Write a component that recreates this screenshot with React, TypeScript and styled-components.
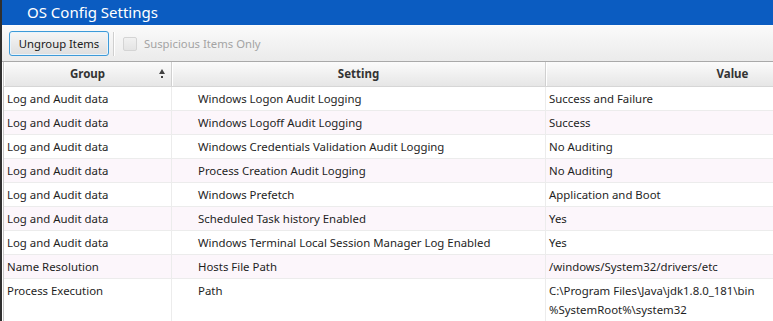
import React from "react";
import styled, { createGlobalStyle } from "styled-components";

const Global = createGlobalStyle`
  html, body { margin: 0; padding: 0; background: #ffffff; overflow: hidden; }
  body { font-family: "Noto Sans", "Open Sans", sans-serif; }
`;

const Window = styled.div`
  width: 773px;
  height: 321px;
  display: flex;
  flex-direction: column;
  border-left: 2px solid #2f2f2f;
  box-sizing: border-box;
  overflow: hidden;
  background: #ffffff;
`;

const TitleBar = styled.div`
  height: 25px;
  flex: none;
  background: #0b5cc1;
  color: #ffffff;
  font-family: "Noto Sans", sans-serif;
  font-size: 15px;
  line-height: 25px;
  padding-left: 25px;
`;

const Toolbar = styled.div`
  height: 37px;
  flex: none;
  box-sizing: border-box;
  border-top: 1px solid #fdfdfd;
  border-bottom: 1px solid #a9a9a9;
  background: linear-gradient(#fafafa, #ebebeb);
  display: flex;
  align-items: center;
  padding-left: 7px;
`;

const Button = styled.button`
  height: 25px;
  width: 100px;
  box-sizing: border-box;
  border: 1px solid #3d9ad8;
  border-radius: 3px;
  background: linear-gradient(#f6f6f6, #dedede);
  box-shadow: inset 0 0 0 1px #e8f4fc;
  font-family: "Noto Sans", sans-serif;
  font-size: 11.3px;
  color: #202020;
  padding: 0;
`;

const Separator = styled.div`
  width: 1px;
  height: 24px;
  background: #cfcfcf;
  border-right: 1px solid #ffffff;
  margin: 0 8px 0 4px;
`;

const CheckRow = styled.label`
  display: flex;
  align-items: center;
  gap: 7px;
  font-size: 11.3px;
  color: #a4a4a4;
  font-family: "Noto Sans", sans-serif;
`;

const CheckBox = styled.span`
  width: 14px;
  height: 14px;
  box-sizing: border-box;
  border: 1px solid #d4d4d4;
  border-radius: 2px;
  background: linear-gradient(#f1f1f1, #e4e4e4);
  display: inline-block;
`;

const Table = styled.div`
  flex: 1;
  margin-left: 1px;
  border-left: 1px solid #c6c6c6;
  overflow: hidden;
  background: #ffffff;
`;

const COLS = "168px 374px 374px";

const HeaderRow = styled.div`
  display: grid;
  grid-template-columns: ${COLS};
  height: 25px;
  box-sizing: border-box;
  border-bottom: 1px solid #d6d6d6;
  background: linear-gradient(#fbfbfb, #e6e6e6);
`;

const HeaderCell = styled.div`
  position: relative;
  box-sizing: border-box;
  border-right: 1px solid #d0d0d0;
  box-shadow: inset 1px 0 0 #ffffff;
  font-weight: 700;
  font-size: 11.5px;
  color: #333333;
  text-align: center;
  line-height: 24px;
`;

const SortMark = styled.span`
  position: absolute;
  right: 6px;
  top: 7px;
  display: flex;
  flex-direction: column;
  align-items: center;
  gap: 2px;
`;

const Arrow = styled.span`
  width: 0;
  height: 0;
  border-left: 3.5px solid transparent;
  border-right: 3.5px solid transparent;
  border-bottom: 5px solid #404040;
`;

const Dot = styled.span`
  width: 2px;
  height: 2px;
  background: #404040;
`;

const Row = styled.div<{ $alt: boolean }>`
  display: grid;
  grid-template-columns: ${COLS};
  min-height: 24px;
  box-sizing: border-box;
  border-bottom: 1px solid #ececec;
  background: ${(p) => (p.$alt ? "#fcf6fb" : "#ffffff")};
`;

const Cell = styled.div<{ $indent?: number }>`
  box-sizing: border-box;
  border-right: 1px solid #ececec;
  padding: 2px 3px 2px ${(p) => p.$indent ?? 3}px;
  font-size: 11.4px;
  line-height: 19px;
  color: #1e1e1e;
  white-space: pre;
`;

type Item = { group: string; setting: string; value: string };

const items: Item[] = [
  { group: "Log and Audit data", setting: "Windows Logon Audit Logging", value: "Success and Failure" },
  { group: "Log and Audit data", setting: "Windows Logoff Audit Logging", value: "Success" },
  { group: "Log and Audit data", setting: "Windows Credentials Validation Audit Logging", value: "No Auditing" },
  { group: "Log and Audit data", setting: "Process Creation Audit Logging", value: "No Auditing" },
  { group: "Log and Audit data", setting: "Windows Prefetch", value: "Application and Boot" },
  { group: "Log and Audit data", setting: "Scheduled Task history Enabled", value: "Yes" },
  { group: "Log and Audit data", setting: "Windows Terminal Local Session Manager Log Enabled", value: "Yes" },
  { group: "Name Resolution", setting: "Hosts File Path", value: "/windows/System32/drivers/etc" },
  {
    group: "Process Execution",
    setting: "Path",
    value: "C:\\Program Files\\Java\\jdk1.8.0_181\\bin\n%SystemRoot%\\system32\n%SystemRoot%\n%SystemRoot%\\System32\\Wbem",
  },
];

export default function App() {
  return (
    <>
      <Global />
      <Window>
        <TitleBar>OS Config Settings</TitleBar>
        <Toolbar>
          <Button>Ungroup Items</Button>
          <Separator />
          <CheckRow>
            <CheckBox />
            Suspicious Items Only
          </CheckRow>
        </Toolbar>
        <Table>
          <HeaderRow>
            <HeaderCell>
              Group
              <SortMark>
                <Arrow />
                <Dot />
              </SortMark>
            </HeaderCell>
            <HeaderCell>Setting</HeaderCell>
            <HeaderCell>Value</HeaderCell>
          </HeaderRow>
          {items.map((it, i) => (
            <Row key={i} $alt={i % 2 === 1}>
              <Cell>{it.group}</Cell>
              <Cell $indent={26}>{it.setting}</Cell>
              <Cell>{it.value}</Cell>
            </Row>
          ))}
        </Table>
      </Window>
    </>
  );
}
